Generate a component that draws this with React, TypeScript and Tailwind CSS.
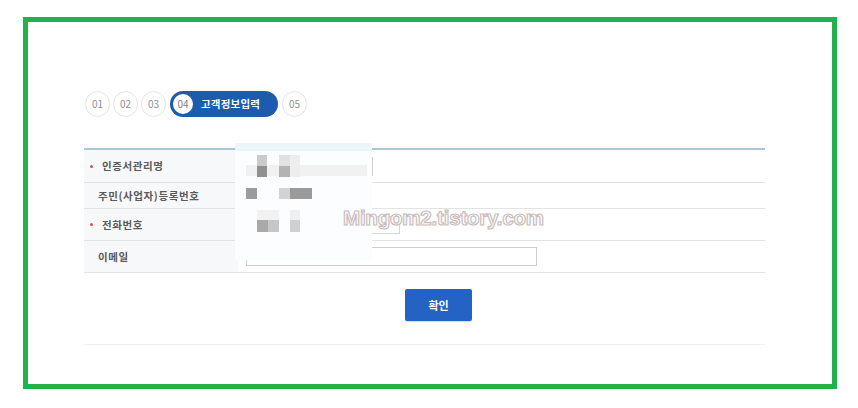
import React from "react";

const font = "font-['Noto_Sans_CJK_KR','Noto_Sans',sans-serif]";

/* ---------- Step indicator ---------- */
function StepDot({ n }: { n: string }) {
  return (
    <div className="w-[25px] h-[26px] rounded-full border border-[#e4e4e4] bg-white flex items-center justify-center text-[10px] text-[#8f8f8f] leading-none">
      {n}
    </div>
  );
}

function Steps() {
  return (
    <div className="ml-[57px] mt-[69px] flex items-center gap-[3px]">
      <StepDot n="01" />
      <StepDot n="02" />
      <StepDot n="03" />
      <div className="ml-[1px] w-[108px] h-[26px] rounded-full bg-[#1d5bac] flex items-center">
        <div className="ml-[1px] w-[24px] h-[24px] rounded-full bg-white border-2 border-[#1d5bac] flex items-center justify-center text-[10px] text-[#808080] leading-none">
          04
        </div>
        <span className="ml-[6px] text-[10.5px] font-bold text-white tracking-[0.2px] leading-none">
          고객정보입력
        </span>
      </div>
      <div className="ml-[1px]">
        <StepDot n="05" />
      </div>
    </div>
  );
}

/* ---------- Form rows ---------- */
function Row({
  label,
  required,
  h,
  children,
}: {
  label: string;
  required?: boolean;
  h: string;
  children?: React.ReactNode;
}) {
  return (
    <div className={`flex border-b border-[#e3e3e3] ${h}`}>
      <div className="w-[154px] shrink-0 bg-[#f7f8f9] flex items-center text-[10.5px] font-semibold tracking-[0.6px] text-[#5a5a5a]">
        {required ? (
          <>
            <span className="ml-[6px] w-[3px] h-[3px] rounded-full bg-[#d9534f]" />
            <span className="ml-[9px]">{label}</span>
          </>
        ) : (
          <span className="ml-[14px]">{label}</span>
        )}
      </div>
      <div className="flex-1 flex items-center bg-white">{children}</div>
    </div>
  );
}

function Field({ w }: { w: string }) {
  return <div className={`ml-[8px] h-[19px] border border-[#cfcfcf] bg-white ${w}`} />;
}

/* ---------- Censor overlay ---------- */
const blocks: { x: number; y: number; w: number; h: number; c: string }[] = [
  { x: 11, y: 22, w: 121, h: 11, c: "#f1f1f1" },
  { x: 22, y: 12, w: 10, h: 11, c: "#cbcbcb" },
  { x: 22, y: 23, w: 10, h: 11, c: "#909090" },
  { x: 44, y: 12, w: 11, h: 11, c: "#e2e2e2" },
  { x: 44, y: 23, w: 11, h: 11, c: "#b3b3b3" },
  { x: 55, y: 12, w: 10, h: 22, c: "#eeeeee" },
  { x: 11, y: 45, w: 11, h: 11, c: "#9c9c9c" },
  { x: 44, y: 45, w: 11, h: 11, c: "#d3d3d3" },
  { x: 55, y: 45, w: 22, h: 11, c: "#9a9a9a" },
  { x: 22, y: 67, w: 22, h: 10, c: "#f2f2f2" },
  { x: 55, y: 67, w: 10, h: 10, c: "#f0f0f0" },
  { x: 22, y: 77, w: 11, h: 12, c: "#a9a9a9" },
  { x: 33, y: 77, w: 11, h: 12, c: "#c6c6c6" },
  { x: 55, y: 77, w: 10, h: 12, c: "#d0d0d0" },
];

function Censor() {
  return (
    <div className="absolute left-[207px] top-[121px] w-[137px] h-[117px] bg-[#fcfdfe]">
      <div className="h-[8px] bg-[#ecf7fa]" />
      {blocks.map((b, i) => (
        <div
          key={i}
          className="absolute"
          style={{ left: b.x, top: b.y, width: b.w, height: b.h, background: b.c }}
        />
      ))}
    </div>
  );
}

export default function App() {
  return (
    <div className={`w-[858px] h-[408px] bg-white pt-[17px] pl-[23px] ${font}`}>
      <div className="relative w-[814px] h-[372px] border-[5px] border-[#22b14c] flex flex-col">
        <Steps />

        <div className="ml-[56px] mt-[31px] w-[681px] border-t-2 border-[#a9c8d7]">
          <Row label="인증서관리명" required h="h-[33px]">
            <Field w="w-[127px]" />
          </Row>
          <Row label="주민(사업자)등록번호" h="h-[26px]" />
          <Row label="전화번호" required h="h-[32px]">
            <div className="ml-[8px] h-[18px] w-[154px] border border-[#d6d6d6] bg-white" />
          </Row>
          <Row label="이메일" h="h-[32px]">
            <Field w="w-[291px]" />
          </Row>
        </div>

        <button className="ml-[377px] mt-[16px] w-[67px] h-[32px] bg-[#2462c3] rounded-[2px] text-white text-[11px] font-bold shadow-[0_1px_1px_rgba(0,0,0,0.15)]">
          확인
        </button>

        <div className="ml-[56px] mt-[23px] w-[681px] border-t border-[#f0f0f0]" />

        <Censor />

        <div className="absolute left-[315px] top-[186px] font-['Liberation_Sans',sans-serif] font-bold text-[20.5px] tracking-[-0.2px] leading-none text-white [-webkit-text-stroke:1.2px_#c9bdbd]">
          Mingom2.tistory.com
        </div>
      </div>
    </div>
  );
}
